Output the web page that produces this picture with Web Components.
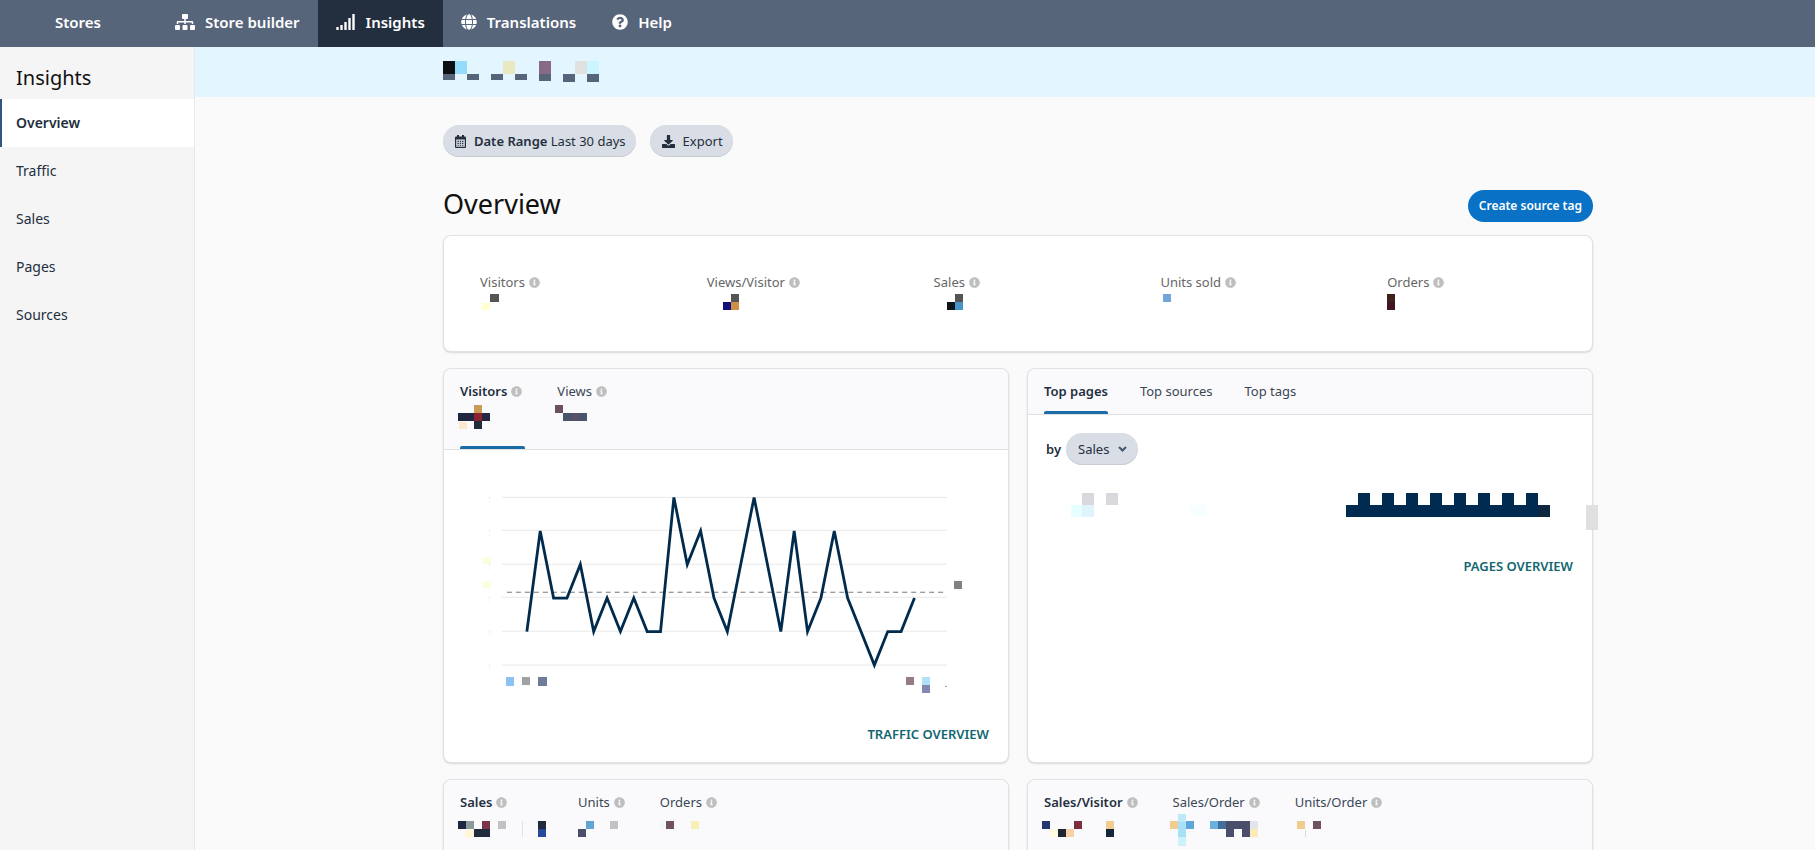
<!DOCTYPE html>
<html lang="en">
<head>
<meta charset="utf-8">
<title>Insights - Overview</title>
<style>
  html, body { margin: 0; height: 100%; }
  body {
    font-family: "Noto Sans", "Open Sans", sans-serif;
    font-size: 13px; line-height: 20px; color: #333e4d; background: #fafafa;
    --ink: #232f3e; --accent: #1a6ba6; --line: #dfe1e3; --pill: #d9dde5;
  }
</style>
</head>
<body>
<insights-app></insights-app>
<script>
const define = (name, markup, setup) => {
  const template = document.createElement('template');
  template.innerHTML = markup;
  customElements.define(name, class extends HTMLElement {
    constructor() {
      super();
      this.attachShadow({ mode: 'open' }).append(template.content.cloneNode(true));
    }
    connectedCallback() { if (setup) setup(this, this.shadowRoot); }
  });
};

/* Obscured values: coloured cells, "x y w h colour" separated by "|". */
define('pixel-mosaic', `
  <style>
    :host { display: block; }
    svg { display: block; overflow: visible; }
  </style>
  <svg aria-hidden="true" shape-rendering="crispEdges"></svg>`,
  (host, root) => {
    const svg = root.querySelector('svg');
    svg.setAttribute('width', host.getAttribute('width') || 32);
    svg.setAttribute('height', host.getAttribute('height') || 16);
    svg.innerHTML = host.getAttribute('cells').split('|').map(c => {
      const [x, y, w, h, f] = c.trim().split(/\s+/);
      return `<rect x="${x}" y="${y}" width="${w}" height="${h}" fill="${f}"/>`;
    }).join('');
  });

define('info-icon', `
  <style>:host { display: inline-flex; margin: 1px 3px 0 4px; } svg { display: block; }</style>
  <svg width="11" height="11" viewBox="0 0 512 512" aria-hidden="true"><path fill="#bfbfbf" d="M256 8C119 8 8 119 8 256s111 248 248 248 248-111 248-248S393 8 256 8zm0 110a42 42 0 1 1 0 84 42 42 0 0 1 0-84zm56 254a12 12 0 0 1-12 12h-88a12 12 0 0 1-12-12v-24a12 12 0 0 1 12-12h12v-64h-12a12 12 0 0 1-12-12v-24a12 12 0 0 1 12-12h64a12 12 0 0 1 12 12v100h12a12 12 0 0 1 12 12z"/></svg>`);

define('nav-item', `
  <style>
    :host { display: flex; }
    a { display: flex; align-items: center; gap: 10px; padding: 0 18px 3px; color: #fff; font-size: 15px;
        font-weight: 600; text-decoration: none; white-space: nowrap; }
    :host([current]) a { background: var(--ink); }
    ::slotted(svg) { display: block; fill: #fff; }
  </style>
  <a href="#"><slot name="icon"></slot><slot></slot></a>`,
  (host, root) => { if (host.hasAttribute('current')) root.querySelector('a').setAttribute('aria-current', 'page'); });

define('top-nav', `
  <style>
    :host { display: block; background: #56657a; }
    nav { display: flex; height: 47px; }
    .brand { margin-left: 37px; margin-right: 38px; }
  </style>
  <nav aria-label="Main">
    <nav-item class="brand">Stores</nav-item>
    <nav-item><svg slot="icon" width="20" height="16" viewBox="0 0 640 512"><path d="M128 352H32a32 32 0 0 0-32 32v96a32 32 0 0 0 32 32h96a32 32 0 0 0 32-32v-96a32 32 0 0 0-32-32zm-24-80h192v48h48v-48h192v48h48v-57c0-22-18-39-40-39H344v-64h40a32 32 0 0 0 32-32V32a32 32 0 0 0-32-32H256a32 32 0 0 0-32 32v96a32 32 0 0 0 32 32h40v64H96c-22 0-40 18-40 39v57h48v-48zm264 80h-96a32 32 0 0 0-32 32v96a32 32 0 0 0 32 32h96a32 32 0 0 0 32-32v-96a32 32 0 0 0-32-32zm240 0h-96a32 32 0 0 0-32 32v96a32 32 0 0 0 32 32h96a32 32 0 0 0 32-32v-96a32 32 0 0 0-32-32z"/></svg>Store builder</nav-item>
    <nav-item current><svg slot="icon" width="20" height="16" viewBox="0 0 20 16"><rect x="0.300" y="13" width="2.400" height="3" rx="0.600"/><rect x="4.300" y="11" width="2.400" height="5" rx="0.600"/><rect x="8.300" y="8" width="2.400" height="8" rx="0.600"/><rect x="12.300" y="4" width="2.400" height="12" rx="0.600"/><rect x="16.300" y="0" width="2.400" height="16" rx="0.600"/></svg>Insights</nav-item>
    <nav-item><svg slot="icon" width="16" height="16" viewBox="0 0 496 512"><path d="M336.500 160C322 70.700 287.800 8 248 8s-74 62.700-88.500 152h177zM152 256c0 22.200 1.200 43.500 3.300 64h185.300c2.100-20.500 3.300-41.800 3.300-64s-1.200-43.500-3.300-64H155.300c-2.100 20.500-3.300 41.800-3.300 64zm324.700-96c-28.600-67.900-86.500-120.400-158-141.600 24.400 33.800 41.200 84.700 50 141.600h108zM177.200 18.400C105.800 39.600 47.800 92.100 19.300 160h108c8.700-56.900 25.500-107.800 49.900-141.600zM487.400 192H372.700c2.100 21 3.300 42.500 3.300 64s-1.200 43-3.300 64h114.600c5.500-20.500 8.600-41.800 8.600-64s-3.100-43.500-8.500-64zM120 256c0-21.500 1.200-43 3.300-64H8.600C3.200 212.500 0 233.800 0 256s3.200 43.500 8.600 64h114.600c-2-21-3.200-42.500-3.200-64zm39.500 96c14.500 89.300 48.700 152 88.500 152s74-62.700 88.500-152h-177zm159.300 141.600c71.400-21.200 129.400-73.700 158-141.600h-108c-8.800 56.900-25.600 107.800-50 141.600zM19.300 352c28.600 67.900 86.500 120.400 158 141.600-24.400-33.800-41.200-84.700-50-141.600h-108z"/></svg>Translations</nav-item>
    <nav-item><svg slot="icon" width="16" height="16" viewBox="0 0 512 512"><path d="M504 256c0 137-111 248-248 248S8 393 8 256 119 8 256 8s248 111 248 248zM262.700 90c-54.500 0-89.300 23-116.500 63.800a12 12 0 0 0 2.600 15.800l34.700 26.300a12 12 0 0 0 16.700-2.100c17.900-22.700 30.100-35.800 57.300-35.800 20.400 0 45.700 13.100 45.700 33 0 15-12.400 22.700-32.500 34C247.100 238.100 216 254.900 216 296v4a12 12 0 0 0 12 12h56a12 12 0 0 0 12-12v-1.300c0-28.800 84.200-30 84.200-108 0-58.700-60.900-103-117.500-103zM256 338a46 46 0 1 0 0 92 46 46 0 0 0 0-92z"/></svg>Help</nav-item>
  </nav>`);

define('side-nav', `
  <style>
    :host { display: block; box-sizing: border-box; width: 195px; background: #f5f5f5; border-right: 1px solid #e6e8ea; }
    h2 { margin: 0; padding: 17px 16px 7px; font-size: 20px; line-height: 28px; font-weight: 400; color: #111; }
    a { display: block; padding: 14px 14px; border-left: 2px solid transparent; color: var(--ink); font-size: 14px; text-decoration: none; }
    a[aria-current] { background: #fff; border-left-color: #33557f; font-weight: 600; }
  </style>
  <h2>Insights</h2>
  <nav aria-label="Insights">
    <a href="#" aria-current="page">Overview</a><a href="#">Traffic</a><a href="#">Sales</a><a href="#">Pages</a><a href="#">Sources</a>
  </nav>`);

define('pill-button', `
  <style>
    :host { display: inline-flex; }
    button { display: flex; align-items: center; height: 32px; padding: 0 10px 0 12px; border: 0; border-radius: 16px;
             background: var(--pill); color: var(--ink); font: inherit; white-space: nowrap;
             box-shadow: inset 0 -1px #c8cdd4; cursor: pointer; }
    :host([primary]) button { padding: 0 11px; background: #0972c6; color: #fff; font-size: 12px; font-weight: 600; box-shadow: none; }
    ::slotted(svg) { display: block; margin-right: 8px; fill: var(--ink); }
  </style>
  <button type="button"><slot name="icon"></slot><span><slot></slot></span></button>`);

define('metric-tile', `
  <style>
    :host { display: block; padding-left: 29px; color: #666; }
    .label { display: flex; align-items: center; margin-bottom: 2px; }
  </style>
  <div class="label"><slot></slot><info-icon></info-icon></div>
  <slot name="value"></slot>`);

define('panel-card', `
  <style>
    :host { display: flex; flex-direction: column; box-sizing: border-box; min-width: 0; background: #fff; border: 1px solid var(--line);
            border-radius: 8px; box-shadow: 0 1px 2px #0002; }
    .head { display: flex; gap: 32px; padding: 0 16px; background: #fafafc; border-radius: 8px 8px 0 0; border-bottom: 1px solid var(--line); }
  </style>
  <div class="head" role="tablist"><slot name="tab"></slot></div>
  <slot></slot>`);

define('panel-tab', `
  <style>
    :host { display: flex; }
    button { display: flex; flex-direction: column; justify-content: space-between; align-items: stretch; gap: 10px; padding: 12px 0 0;
             border: 0; background: none; color: #3b4654; font: inherit; text-align: left; white-space: nowrap; cursor: pointer; }
    .label { display: flex; align-items: center; }
    .bar { height: 3px; border-radius: 2px 2px 0 0; }
    ::slotted([slot=value]) { margin: -6px 0 -1px; }
    :host([selected]) button { color: var(--ink); font-weight: 600; }
    :host([selected]) .bar { background: var(--accent); }
    :host(:not([info])) info-icon { display: none; }
  </style>
  <button type="button" role="tab"><span class="label"><slot></slot><info-icon></info-icon></span><slot name="value"></slot><span class="bar"></span></button>`,
  (host, root) => root.querySelector('button').setAttribute('aria-selected', host.hasAttribute('selected')));

define('more-link', `
  <style>
    :host { display: flex; justify-content: flex-end; padding: 0 19px; }
    a { color: #11666f; font-weight: 600; text-decoration: none; }
  </style>
  <a href="#"><slot></slot></a>`);

define('visitor-chart', `
  <style>:host { display: block; } svg { display: block; width: 100%; height: auto; }</style>
  <svg viewBox="0 0 565 252" role="img" aria-label="Visitors over the last 30 days">
    <g class="grid" stroke="#e9e9e9" stroke-width="1"></g>
    <path d="M63 142.500H501" stroke="#777" stroke-dasharray="5 4" fill="none"/>
    <path class="series" fill="none" stroke="#002b4d" stroke-width="2.800"/>
    <g shape-rendering="crispEdges">
      <rect x="39" y="107" width="8" height="7" fill="#f8ffdc"/><rect x="39" y="131" width="8" height="7" fill="#f8ffdc"/>
      <rect x="62" y="227" width="8" height="9" fill="#8cc1f3"/><rect x="78" y="227" width="8" height="8" fill="#a0a1a3"/><rect x="94" y="227" width="9" height="9" fill="#6c7c99"/>
      <rect x="463" y="227" width="8" height="8" fill="#967d85"/><rect x="479" y="227" width="8" height="8" fill="#b0e1f6"/><rect x="479" y="235" width="8" height="8" fill="#8388b3"/>
      <rect x="511" y="131" width="8" height="8" fill="#818181"/><rect x="502" y="236" width="2" height="1" fill="#9aa"/>
    </g>
  </svg>`,
  (host, root) => {
    const levels = [1,4,2,2,3,1,2,1,2,1,1,5,3,4,2,1,3,5,3,1,4,1,2,4,2,1,0,1,1,2];
    const y = v => 215.500 - v * 33.600;
    root.querySelector('.series').setAttribute('d', 'M' + levels.map((v, i) => `${83 + i * 13.390} ${y(v)}`).join('L'));
    root.querySelector('.grid').innerHTML = [0,1,2,3,4,5].map(v =>
      `<path d="M58 ${Math.round(y(v)) - 0.500}H504"/><path stroke-dasharray="2 2" d="M45.500 ${Math.round(y(v)) - 1}v5"/>`).join('');
  });

define('sort-select', `
  <style>
    :host { display: flex; align-items: center; gap: 5px; padding: 18px 18px 0; }
    label { font-weight: 600; color: var(--ink); }
    .box { display: grid; align-items: center; }
    .box > * { grid-area: 1 / 1; }
    select { appearance: none; width: 72px; height: 32px; padding: 0 12px; border: 0; border-radius: 16px; background: var(--pill);
             color: var(--ink); font: inherit; box-shadow: inset 0 -1px #c8cdd4; }
    svg { justify-self: end; margin-right: 11px; pointer-events: none; }
  </style>
  <label for="sort">by</label>
  <div class="box"><select id="sort"><option>Sales</option><option>Views</option></select>
    <svg width="9" height="9" viewBox="0 0 9 9" aria-hidden="true"><path d="M1 2l3.500 3.500L8 2" fill="none" stroke="#46546a" stroke-width="2"/></svg>
  </div>`);

define('insights-app', `
  <style>
    :host { display: flex; flex-direction: column; height: 100vh; overflow: hidden; }
    .body { display: flex; flex: 1; min-height: 0; }
    side-nav { flex: none; }
    main { flex: 1; min-width: 0; overflow: auto; scrollbar-width: none; }
    .banner { background: #e3f6ff; }
    .gutter { padding-left: 26px; }
    .content { max-width: 1150px; margin: 0 auto; }
    .banner .content { height: 50px; display: flex; align-items: center; }
    .tools { display: flex; gap: 14px; padding-top: 28px; }
    .title { display: flex; justify-content: space-between; align-items: center; padding: 27px 0 7px; }
    h1 { margin: 0 0 4px; font-size: 27px; line-height: 40px; font-weight: 400; color: #111; }
    .summary { display: grid; grid-template-columns: repeat(5, 1fr); box-sizing: border-box; min-height: 117px; padding: 36px 7px 0;
               margin-bottom: 16px; background: #fff; border: 1px solid var(--line); border-radius: 8px; box-shadow: 0 1px 2px #0002; }
    .pair { display: grid; grid-template-columns: 1fr 1fr; gap: 18px; margin-bottom: 16px; }
    .pair.first { min-height: 395px; }
    .pair.second { min-height: 300px; }
    .chart-link { margin-top: 22px; }
    .bars { padding: 28px 0 0 43px; }
    .pages-link { margin-top: 39px; }
    b { font-weight: 600; }
  </style>
  <top-nav></top-nav>
  <div class="body">
    <side-nav></side-nav>
    <main>
      <div class="banner gutter"><div class="content">
        <pixel-mosaic width="156" height="22" cells="0 0 12 13 #0b0f12|12 0 12 13 #95dbfa|60 0 12 13 #e8e9c0|96 0 12 13 #866a86|132 0 12 13 #e1e1df|144 0 12 13 #ccf6ff|0 13 12 6 #56657a|24 13 12 6 #56657a|48 13 12 6 #56657a|72 13 12 6 #56657a|96 13 12 7 #56657a|120 13 12 8 #56657a|144 13 12 8 #56657a"></pixel-mosaic>
      </div></div>
      <div class="gutter"><div class="content">
        <div class="tools">
          <pill-button><svg slot="icon" width="11" height="13" viewBox="0 0 11 13"><path fill-rule="evenodd" d="M2 0h2v1.500h3V0h2v1.500h1q1 0 1 1V12q0 1-1 1H1q-1 0-1-1V2.500q0-1 1-1h1zM1.200 4.500v7.300h8.600V4.500zM2.500 5.700h1.300V7H2.500zm2.300 0h1.300V7H4.800zm2.300 0h1.300V7H7.100zM2.500 7.700h1.300V9H2.500zm2.300 0h1.300V9H4.800zm2.300 0h1.300V9H7.100zM2.500 9.700h1.300v1H2.500zm2.300 0h1.300v1H4.800zm2.300 0h1.300v1H7.100z"/></svg><b>Date Range</b> Last 30 days</pill-button>
          <pill-button><svg slot="icon" width="13" height="13" viewBox="0 0 512 512"><path d="M216 0h80a24 24 0 0 1 24 24v168h88c18 0 27 22 14 34L270 378c-8 8-20 8-28 0L90 226c-13-12-4-34 14-34h88V24a24 24 0 0 1 24-24zm296 376v112a24 24 0 0 1-24 24H24a24 24 0 0 1-24-24V376a24 24 0 0 1 24-24h147l49 49c20 20 52 20 72 0l49-49h147a24 24 0 0 1 24 24z"/></svg>Export</pill-button>
        </div>
        <div class="title"><h1>Overview</h1><pill-button primary>Create source tag</pill-button></div>
        <section class="summary">
          <metric-tile>Visitors<pixel-mosaic slot="value" cells="10 0 9 8 #555653|2 9 8 7 #ffffd0"></pixel-mosaic></metric-tile>
          <metric-tile>Views/Visitor<pixel-mosaic slot="value" cells="24 0 8 8 #555653|16 8 8 8 #12107c|24 8 8 8 #ce9044"></pixel-mosaic></metric-tile>
          <metric-tile>Sales<pixel-mosaic slot="value" cells="21 0 8 8 #555653|13 8 8 8 #0d1317|21 8 8 8 #4593cb"></pixel-mosaic></metric-tile>
          <metric-tile>Units sold<pixel-mosaic slot="value" cells="3 0 8 8 #73a6d8"></pixel-mosaic></metric-tile>
          <metric-tile>Orders<pixel-mosaic slot="value" cells="0 0 8 8 #40211c|0 8 8 8 #431428"></pixel-mosaic></metric-tile>
        </section>
        <div class="pair first">
          <panel-card>
            <panel-tab slot="tab" selected info>Visitors<pixel-mosaic slot="value" height="32" cells="14 0 8 8 #cb9c58|-2 8 16 8 #20263f|14 8 8 8 #8c2231|22 8 8 8 #26263f|-1 17 8 7 #fce8cb|14 16 8 8 #202b3b"></pixel-mosaic></panel-tab>
            <panel-tab slot="tab" info>Views<pixel-mosaic slot="value" height="32" cells="-2 0 8 8 #6b5060|6 8 8 8 #465668|14 8 8 8 #59506a|22 8 8 8 #4a5468"></pixel-mosaic></panel-tab>
            <visitor-chart></visitor-chart>
            <more-link class="chart-link">TRAFFIC OVERVIEW</more-link>
          </panel-card>
          <panel-card>
            <panel-tab slot="tab" selected>Top pages</panel-tab>
            <panel-tab slot="tab">Top sources</panel-tab>
            <panel-tab slot="tab">Top tags</panel-tab>
            <sort-select></sort-select>
            <pixel-mosaic class="bars" width="480" height="24" cells="11 0 12 12 #d8d8dd|35 0 12 12 #d8d8dd|0 12 11 12 #e6ffff|11 12 12 12 #dff4fd|119 12 16 10 #f6ffff|275 12 192 12 #002b50|467 12 12 12 #0d2740|287 0 12 12 #002b50|311 0 12 12 #002b50|335 0 12 12 #002b50|359 0 12 12 #002b50|383 0 12 12 #002b50|407 0 12 12 #002b50|431 0 12 12 #002b50|455 0 12 12 #002b50|515 12 12 25 #e0e0e0"></pixel-mosaic>
            <more-link class="pages-link">PAGES OVERVIEW</more-link>
          </panel-card>
        </div>
        <div class="pair second">
          <panel-card>
            <panel-tab slot="tab" selected info>Sales<pixel-mosaic slot="value" width="86" height="32" cells="-2 5 8 8 #20263f|6 5 8 8 #8c9a98|22 5 8 8 #7c3549|5 14 9 7 #fff6d8|14 13 16 8 #202b3b|38 5 8 8 #c2c2c2|62 5 1 16 #dfe1e4|78 5 8 8 #202b3b|78 13 8 8 #27479b"></pixel-mosaic></panel-tab>
            <panel-tab slot="tab" info>Units<pixel-mosaic slot="value" height="32" cells="8 5 8 8 #60a5d3|0 13 8 8 #4b4e6b|32 5 8 8 #c2c2c2"></pixel-mosaic></panel-tab>
            <panel-tab slot="tab" info>Orders<pixel-mosaic slot="value" height="32" cells="0 5 5 7 #edf9f8|6 5 8 8 #70525f|31 5 8 8 #f8efb5"></pixel-mosaic></panel-tab>
          </panel-card>
          <panel-card>
            <panel-tab slot="tab" selected info>Sales/Visitor<pixel-mosaic slot="value" height="32" cells="-2 5 8 8 #26376f|6 13 8 8 #fffbe0|30 5 8 8 #7c2e3f|14 13 8 8 #1d2732|22 13 8 8 #f8d1a4|62 5 8 8 #f1cc91|62 13 8 8 #15263a"></pixel-mosaic></panel-tab>
            <panel-tab slot="tab" info>Sales/Order<pixel-mosaic slot="value" height="32" cells="-3 5 8 8 #f1cc91|5 -2 8 8 #bdeaf9|5 6 8 15 #a8e0f8|5 21 8 9 #cff1f9|13 5 8 8 #60a5d8|37 5 8 8 #69b0e0|45 5 8 8 #456e9a|53 5 24 8 #4b4e6b|53 13 8 8 #4b4e6b|69 13 8 8 #4b4e6b|77 5 8 8 #e2e6eb|77 13 8 8 #fbebb9"></pixel-mosaic></panel-tab>
            <panel-tab slot="tab" info>Units/Order<pixel-mosaic slot="value" height="32" cells="2 5 8 8 #f1cc91|18 5 8 8 #70525f|10 14 1 7 #d8dadd"></pixel-mosaic></panel-tab>
          </panel-card>
        </div>
      </div></div>
    </main>
  </div>`);
</script>
</body>
</html>
